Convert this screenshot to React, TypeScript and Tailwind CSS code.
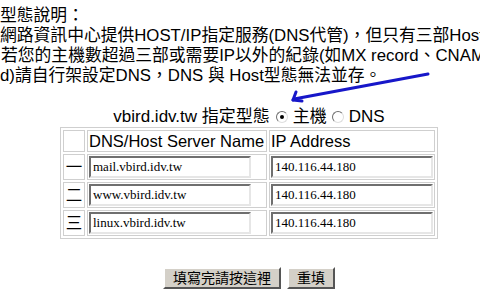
import type { ReactNode } from 'react';

const hosts = [
  { no: '一', name: 'mail.vbird.idv.tw', ip: '140.116.44.180' },
  { no: '二', name: 'www.vbird.idv.tw', ip: '140.116.44.180' },
  { no: '三', name: 'linux.vbird.idv.tw', ip: '140.116.44.180' },
];

// 舊式 Windows 風格的 radio
function Radio({ checked }: { checked?: boolean }) {
  return (
    <span className="mx-[5px] inline-flex h-[12px] w-[12px] items-center justify-center rounded-full border border-t-[#6e6e6e] border-l-[#6e6e6e] border-r-[#dedede] border-b-[#dedede] bg-white">
      {checked && <span className="h-[4px] w-[4px] rounded-full bg-black" />}
    </span>
  );
}

function Cell({ children, className = '' }: { children?: ReactNode; className?: string }) {
  return (
    <td className={`border border-[#cfcfcf] p-[1px] align-middle ${className}`}>{children}</td>
  );
}

function TextBox({ value }: { value: string }) {
  return (
    <input
      type="text"
      defaultValue={value}
      className="block h-[22px] w-[162px] border-2 border-t-[#6f6f6f] border-l-[#6f6f6f] border-r-[#e6e6e6] border-b-[#e6e6e6] bg-white px-[2px] font-['Liberation_Serif','Noto_Sans_CJK_TC',serif] text-[13px] text-black outline-none"
    />
  );
}

export default function App() {
  return (
    <div className="relative h-[300px] w-[480px] overflow-hidden bg-white font-['Liberation_Sans','Noto_Sans_CJK_TC',sans-serif] text-black">
      {/* 說明文字 */}
      <div className="whitespace-nowrap pt-[6px] text-[16.8px] leading-[20px]">
        <div>型態說明：</div>
        <div>網路資訊中心提供HOST/IP指定服務(DNS代管)，但只有三部Host</div>
        <div className="pl-[1px]">若您的主機數超過三部或需要IP以外的紀錄(如MX record、CNAME</div>
        <div>d)請自行架設定DNS，DNS 與 Host型態無法並存。</div>
      </div>

      {/* 表單 */}
      <div className="mt-[20px] flex w-[498px] flex-col items-center">
        <div className="flex h-[21px] items-center whitespace-nowrap text-[17px] leading-[20px]">
          <span>vbird.idv.tw 指定型態</span>
          <span className="w-[1px]" />
          <Radio checked />
          <span>主機</span>
          <Radio />
          <span>DNS</span>
        </div>

        <table className="border-separate border-spacing-[2px] border border-[#cfcfcf] text-[16.5px] leading-[18px]">
          <tbody>
            <tr>
              <Cell className="w-[22px]" />
              <Cell className="w-[180px] whitespace-nowrap">DNS/Host Server Name</Cell>
              <Cell className="w-[166px] whitespace-nowrap">IP Address</Cell>
            </tr>
            {hosts.map((h) => (
              <tr key={h.no}>
                <Cell className="text-center">{h.no}</Cell>
                <Cell>
                  <TextBox value={h.name} />
                </Cell>
                <Cell>
                  <TextBox value={h.ip} />
                </Cell>
              </tr>
            ))}
          </tbody>
        </table>

        <div className="mt-[28px] flex gap-[6px] text-[14px]">
          <button
            type="button"
            className="h-[22px] w-[118px] border-2 border-t-white border-l-white border-r-[#555] border-b-[#555] bg-[#d4d0c8] leading-[18px]"
          >
            填寫完請按這裡
          </button>
          <button
            type="button"
            className="h-[22px] w-[48px] border-2 border-t-white border-l-white border-r-[#555] border-b-[#555] bg-[#d4d0c8] leading-[18px]"
          >
            重填
          </button>
        </div>
      </div>

      {/* 手繪箭頭 */}
      <svg className="pointer-events-none absolute inset-0" width="480" height="300" viewBox="0 0 480 300">
        <g stroke="#1717c9" strokeWidth="3" strokeLinecap="round" fill="none">
          <path d="M428 74 L294 99" />
          <path d="M293 100 L296 92" />
          <path d="M293 100 L302 101" />
        </g>
      </svg>
    </div>
  );
}
